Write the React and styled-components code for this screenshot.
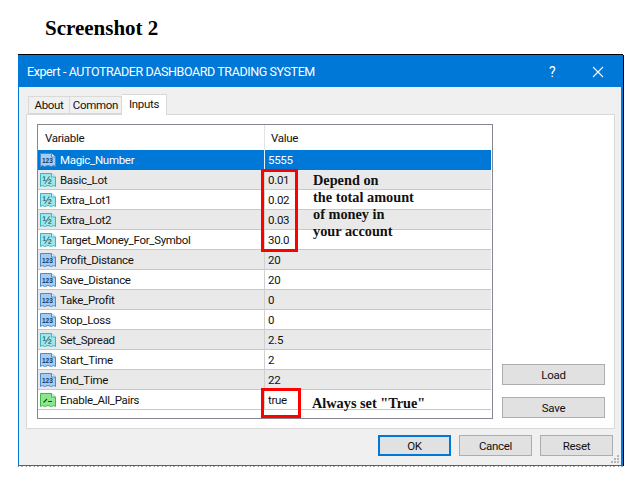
import React from "react";
import styled, { createGlobalStyle } from "styled-components";

const Global = createGlobalStyle`
  html, body {
    margin: 0;
    background: #fff;
  }
  body {
    width: 640px;
    height: 480px;
    overflow: hidden;
    font-family: Roboto, "Noto Sans", sans-serif;
    font-size: 11.500px;
    letter-spacing: -0.3px;
    color: #111;
  }
`;

const Page = styled.div`
  position: relative;
  width: 640px;
  height: 480px;
  padding: 15px 17px 0 18px;
  box-sizing: border-box;
`;

const Heading = styled.h1`
  margin: 0 0 0 27px;
  height: 40px;
  font-family: "Liberation Serif", serif;
  font-weight: bold;
  font-size: 21px;
  line-height: 27px;
  letter-spacing: 0;
  color: #000;
`;

const Window = styled.div`
  position: relative;
  width: 605px;
  height: 411px;
  box-sizing: border-box;
  display: flex;
  flex-direction: column;
  background: #f0f0f0;
  border: 1px solid #0078d7;
  border-right-width: 2px;
  box-shadow: 0 -1px 0 #000, 1px 0 0 #000;
  &::after {
    content: "";
    position: absolute;
    left: -1px;
    right: -2px;
    bottom: -2px;
    height: 1px;
    background: repeating-linear-gradient(90deg, #888 0 1px, #fff 1px 3px, #aaa 3px 5px, #fff 5px 8px);
  }
`;

const TitleBar = styled.div`
  height: 31px;
  flex: none;
  display: flex;
  align-items: center;
  padding: 0 0 0 8px;
  background: #0078d7;
  color: #fff;
  font-size: 12.500px;
  letter-spacing: -0.4px;
`;

const TitleText = styled.span`
  flex: 1;
`;

const TitleButton = styled.span`
  width: 46px;
  display: flex;
  justify-content: center;
  font-size: 14px;
`;

const Content = styled.div`
  flex: 1;
  display: flex;
  flex-direction: column;
  padding: 7px 6px 0 7px;
`;

const Tabs = styled.div`
  display: flex;
  align-items: flex-end;
  height: 20px;
  padding-left: 2px;
  position: relative;
  z-index: 1;
`;

const Tab = styled.div`
  width: ${(p) => p.$width}px;
  box-sizing: border-box;
  display: flex;
  justify-content: center;
  align-items: center;
  border: 1px solid #d9d9d9;
  border-bottom: ${(p) => (p.$active ? "0" : "1px solid #d9d9d9")};
  border-left-width: ${(p) => (p.$first ? "1px" : "0")};
  background: ${(p) => (p.$active ? "#fff" : "#f0f0f0")};
  margin-bottom: ${(p) => (p.$active ? "-1px" : "0")};
  padding-bottom: ${(p) => (p.$active ? "3px" : "0")};
  height: ${(p) => (p.$active ? "21px" : "18px")};
`;

const Panel = styled.div`
  height: 315px;
  box-sizing: border-box;
  display: flex;
  gap: 9px;
  padding: 9px 9px 9px 10px;
  background: #fff;
  border: 1px solid #d9d9d9;
`;

const Table = styled.div`
  width: 456px;
  box-sizing: border-box;
  border: 1px solid #828790;
  padding-right: 1px;
  background: #fff;
`;

const HeaderRow = styled.div`
  display: grid;
  grid-template-columns: 226px 1fr;
  height: 25px;
  align-items: center;
`;

const HeaderCell = styled.div`
  height: 100%;
  display: flex;
  align-items: center;
  padding-left: ${(p) => p.$pad}px;
  border-left: ${(p) => (p.$divider ? "1px solid #e3e3e3" : "0")};
`;

const Row = styled.div`
  display: grid;
  grid-template-columns: 226px 1fr;
  height: 20px;
  box-sizing: border-box;
  align-items: center;
  border-bottom: 1px solid ${(p) => (p.$selected ? "#0078d7" : "#c8c8c8")};
  background: ${(p) => (p.$selected ? "#0078d7" : p.$shaded ? "#e9e9e9" : "#fff")};
  color: ${(p) => (p.$selected ? "#fff" : "#111")};
`;

const NameCell = styled.div`
  display: flex;
  align-items: center;
  gap: 4px;
  padding-left: 2px;
`;

const ValueCell = styled.div`
  height: 20px;
  display: flex;
  align-items: center;
  padding-left: 3px;
  border-left: 1px solid ${(p) => (p.$selected ? "#e8f2fb" : "#d0d0d0")};
`;

const Side = styled.div`
  flex: 1;
  display: flex;
  flex-direction: column;
  justify-content: flex-end;
  gap: 12px;
  padding-bottom: 1px;
`;

const Button = styled.div`
  height: 21px;
  box-sizing: border-box;
  display: flex;
  align-items: center;
  justify-content: center;
  background: #e1e1e1;
  border: 1px solid #adadad;
`;

const Footer = styled.div`
  flex: 1;
  display: flex;
  justify-content: flex-end;
  align-items: flex-start;
  gap: 8px;
  padding: 6px 2px 0 0;
`;

const FooterButton = styled(Button)`
  width: 73px;
  border: ${(p) => (p.$primary ? "2px solid #0078d7" : "1px solid #adadad")};
`;

const Grip = styled.svg`
  position: absolute;
  right: 1px;
  bottom: 1px;
`;

const RedBox = styled.div`
  position: absolute;
  left: 261px;
  top: ${(p) => p.$top}px;
  width: ${(p) => p.$width}px;
  height: ${(p) => p.$height}px;
  box-sizing: border-box;
  border: 3px solid #f00;
`;

const Note = styled.div`
  position: absolute;
  left: ${(p) => p.$left}px;
  top: ${(p) => p.$top}px;
  font-family: "Liberation Serif", serif;
  font-weight: bold;
  font-size: 14.300px;
  line-height: 17px;
  letter-spacing: 0;
  color: #111;
  white-space: pre;
`;

const ICONS = {
  int: { fill: "#a4cbf2", edge: "#4a8ccb", ink: "#123a66" },
  dbl: { fill: "#9fe6ec", edge: "#3fb2bf", ink: "#0c4a55" },
  bool: { fill: "#8fe58f", edge: "#3fb846", ink: "#0b5a12" },
};

const TypeIcon = ({ kind }) => {
  const c = ICONS[kind];
  return (
    <svg width="16" height="16" viewBox="0 0 16 16" style={{ flex: "none" }}>
      <path
        d="M.5 1.500h11l4 3.500v9.500l-2-1-2 1-3.500-1-3.500 1-2-1-2 1z"
        fill={c.fill}
        stroke={c.edge}
      />
      <path d="M11.500 1.500v3.500h4" fill="#e6f4fb" stroke={c.edge} />
      {kind === "bool" ? (
        <path d="M3.500 10.500l3.500-3.500M8 9.500h4" fill="none" stroke={c.ink} strokeWidth="1.200" />
      ) : kind === "int" ? (
        <text x="2" y="11" fontSize="6.500" fontWeight="700" letterSpacing="0" fontFamily="Liberation Sans, sans-serif" fill={c.ink}>
          123
        </text>
      ) : (
        <text x="2.500" y="11.500" fontSize="11" letterSpacing="0" fontFamily="Liberation Sans, sans-serif" fill={c.ink}>
          ½
        </text>
      )}
    </svg>
  );
};

const rows = [
  ["int", "Magic_Number", "5555"],
  ["dbl", "Basic_Lot", "0.01"],
  ["dbl", "Extra_Lot1", "0.02"],
  ["dbl", "Extra_Lot2", "0.03"],
  ["dbl", "Target_Money_For_Symbol", "30.0"],
  ["int", "Profit_Distance", "20"],
  ["int", "Save_Distance", "20"],
  ["int", "Take_Profit", "0"],
  ["int", "Stop_Loss", "0"],
  ["dbl", "Set_Spread", "2.5"],
  ["int", "Start_Time", "2"],
  ["int", "End_Time", "22"],
  ["bool", "Enable_All_Pairs", "true"],
];

const App = () => (
  <Page>
    <Global />
    <Heading>Screenshot 2</Heading>
    <Window>
      <TitleBar>
        <TitleText>Expert - AUTOTRADER DASHBOARD TRADING SYSTEM</TitleText>
        <TitleButton>?</TitleButton>
        <TitleButton>
          <svg width="12" height="12" viewBox="0 0 12 12">
            <path d="M1 1l10 10M11 1L1 11" stroke="#fff" strokeWidth="1.100" />
          </svg>
        </TitleButton>
      </TitleBar>
      <Content>
        <Tabs>
          <Tab $first $width={42}>About</Tab>
          <Tab $width={52}>Common</Tab>
          <Tab $active $width={45}>Inputs</Tab>
        </Tabs>
        <Panel>
          <Table>
            <HeaderRow>
              <HeaderCell $pad={7}>Variable</HeaderCell>
              <HeaderCell $pad={6} $divider>Value</HeaderCell>
            </HeaderRow>
            {rows.map(([kind, name, value], i) => (
              <Row key={name} $selected={i === 0} $shaded={i % 2 === 1}>
                <NameCell>
                  <TypeIcon kind={kind} />
                  {name}
                </NameCell>
                <ValueCell $selected={i === 0}>{value}</ValueCell>
              </Row>
            ))}
          </Table>
          <Side>
            <Button>Load</Button>
            <Button>Save</Button>
          </Side>
        </Panel>
        <Footer>
          <FooterButton $primary>OK</FooterButton>
          <FooterButton>Cancel</FooterButton>
          <FooterButton>Reset</FooterButton>
        </Footer>
      </Content>
      <Grip width="9" height="9" viewBox="0 0 9 9" fill="#b5b5b5">
        <rect x="6" y="0" width="2" height="2" />
        <rect x="3" y="3" width="2" height="2" />
        <rect x="6" y="3" width="2" height="2" />
        <rect x="0" y="6" width="2" height="2" />
        <rect x="3" y="6" width="2" height="2" />
        <rect x="6" y="6" width="2" height="2" />
      </Grip>
    </Window>
    <RedBox $top={169} $width={37} $height={83} />
    <RedBox $top={388} $width={40} $height={30} />
    <Note $left={313} $top={172}>{"Depend on\nthe total amount\nof money in\nyour account"}</Note>
    <Note $left={312} $top={395}>Always set "True"</Note>
  </Page>
);

export default App;
